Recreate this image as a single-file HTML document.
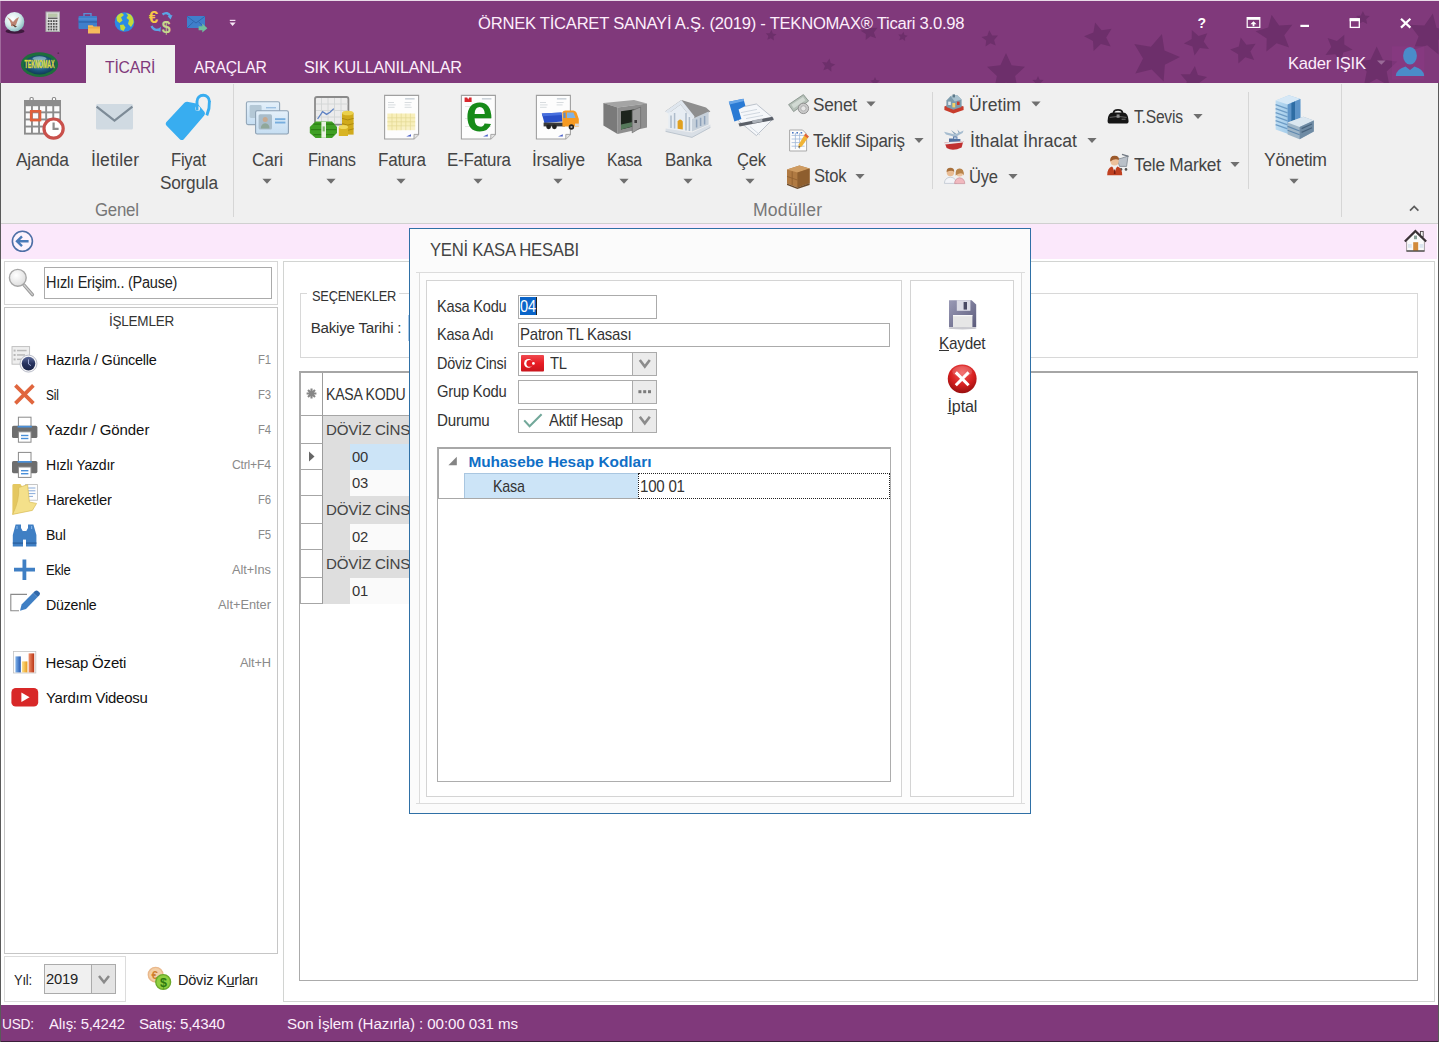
<!DOCTYPE html><html><head><meta charset="utf-8"><title>TEKNOMAX Ticari</title><style>
html,body{margin:0;padding:0;}body{width:1439px;height:1042px;overflow:hidden;position:relative;background:#fff;font-family:"Liberation Sans",sans-serif;}
.b{position:absolute;box-sizing:border-box;}.t{position:absolute;white-space:nowrap;line-height:1;transform-origin:0 50%;}svg{position:absolute;overflow:visible;}
</style></head><body>
<div class="b" style="left:0px;top:0px;width:1439px;height:83px;background:#80397b;"></div>
<svg style="left:0;top:0" width="1439" height="83" viewBox="0 0 1439 83"><g fill="#6d2f6b"><polygon points="1095.1,22.5 1101.6,30.3 1111.6,28.8 1106.2,37.4 1110.7,46.4 1100.9,44.0 1093.6,51.0 1093.0,40.9 1084.0,36.2 1093.4,32.5"/><polygon points="1161.9,34.0 1164.5,50.6 1180.0,57.1 1164.9,64.7 1163.6,81.5 1151.7,69.5 1135.3,73.4 1143.0,58.4 1134.3,44.0 1150.9,46.7"/><polygon points="1191.8,29.9 1198.6,35.9 1207.3,33.2 1203.7,41.5 1209.0,49.0 1199.9,48.1 1194.5,55.4 1192.5,46.5 1183.9,43.6 1191.7,39.0"/><polygon points="1194.9,66.1 1197.9,75.0 1207.1,77.1 1199.5,82.7 1200.4,92.1 1192.7,86.7 1184.0,90.4 1186.8,81.4 1180.6,74.3 1190.0,74.2"/><polygon points="1240.7,37.4 1246.4,44.7 1255.6,43.7 1250.4,51.4 1254.2,59.9 1245.3,57.3 1238.4,63.5 1238.1,54.2 1230.1,49.6 1238.8,46.5"/><polygon points="1271.6,14.7 1279.1,25.5 1292.3,24.8 1284.3,35.3 1289.1,47.6 1276.6,43.3 1266.4,51.6 1266.7,38.4 1255.6,31.3 1268.2,27.5"/><polygon points="1362.9,10.9 1365.0,15.4 1369.8,15.9 1366.2,19.3 1367.2,24.1 1362.9,21.7 1358.6,24.1 1359.6,19.3 1356.0,15.9 1360.8,15.4"/><polygon points="1344.3,34.8 1344.3,44.5 1352.6,49.7 1343.3,52.6 1341.0,62.1 1335.3,54.2 1325.5,54.9 1331.3,47.1 1327.6,38.0 1336.9,41.1"/><polygon points="1432.8,13.5 1436.5,27.7 1450.6,32.0 1438.2,39.9 1438.6,54.6 1427.2,45.3 1413.3,50.1 1418.6,36.5 1409.8,24.8 1424.4,25.6"/><polygon points="1376.7,46.5 1382.9,59.8 1397.4,61.6 1386.7,71.5 1389.5,85.9 1376.7,78.8 1363.9,85.9 1366.7,71.5 1356.0,61.6 1370.5,59.8"/><polygon points="771.5,29.8 772.8,33.4 776.6,34.2 773.5,36.6 773.9,40.4 770.8,38.2 767.3,39.8 768.3,36.1 765.8,33.3 769.6,33.2"/><polygon points="868.0,23.1 871.5,28.1 877.5,27.8 873.9,32.6 876.1,38.3 870.4,36.3 865.7,40.1 865.8,34.0 860.7,30.7 866.5,29.0"/><polygon points="903.5,31.7 904.5,35.0 907.7,35.8 905.0,37.8 905.1,41.1 902.5,39.1 899.3,40.3 900.4,37.1 898.3,34.5 901.7,34.6"/><polygon points="989.2,30.3 992.2,35.4 998.0,35.6 994.1,39.9 995.7,45.6 990.4,43.2 985.5,46.5 986.2,40.6 981.5,37.0 987.3,35.8"/><polygon points="829.5,58.5 830.7,63.1 835.2,64.4 831.3,67.0 831.4,71.7 827.7,68.7 823.3,70.3 825.0,65.9 822.1,62.1 826.8,62.4"/><polygon points="1006.0,53.0 1011.6,65.2 1025.0,66.8 1015.1,76.0 1017.8,89.2 1006.0,82.6 994.2,89.2 996.9,76.0 987.0,66.8 1000.4,65.2"/><polygon points="875.0,77.0 876.4,80.1 879.8,80.5 877.3,82.7 877.9,86.0 875.0,84.4 872.1,86.0 872.7,82.7 870.2,80.5 873.6,80.1"/><polygon points="1038.0,76.0 1039.7,79.7 1043.7,80.1 1040.7,82.9 1041.5,86.9 1038.0,84.9 1034.5,86.9 1035.3,82.9 1032.3,80.1 1036.3,79.7"/></g></svg>
<div class="b" style="left:86px;top:45px;width:89px;height:38px;background:#f0f0f0;"></div>
<div class="b" style="left:0px;top:83px;width:1439px;height:140px;background:#f0f0f0;"></div>
<div class="b" style="left:0px;top:223px;width:1439px;height:1px;background:#d0d0d0;"></div>
<div class="b" style="left:0px;top:224px;width:1439px;height:35px;background:#fbe8fb;"></div>
<div class="b" style="left:1437px;top:224px;width:1px;height:35px;background:#fff;"></div>
<div class="b" style="left:0px;top:259px;width:1439px;height:746px;background:#ffffff;"></div>
<div class="b" style="left:233px;top:84px;width:1px;height:133px;background:#d6d6d6;"></div>
<div class="b" style="left:932px;top:92px;width:1px;height:97px;background:#d6d6d6;"></div>
<div class="b" style="left:1248px;top:92px;width:1px;height:97px;background:#d6d6d6;"></div>
<div class="b" style="left:1341px;top:84px;width:1px;height:133px;background:#d6d6d6;"></div>
<div class="b" style="left:4px;top:261px;width:274px;height:44px;background:#fff;border:1px solid #d6d6d6;"></div>
<div class="b" style="left:44px;top:267px;width:228px;height:32px;background:#fff;border:1px solid #ababab;"></div>
<div class="b" style="left:4px;top:307px;width:274px;height:647px;background:#fff;border:1px solid #c6c6c6;"></div>
<div class="b" style="left:4px;top:956px;width:122px;height:46px;background:#fff;border:1px solid #dcdcdc;"></div>
<div class="b" style="left:44px;top:964px;width:72px;height:30px;background:#f0f0f0;border:1px solid #ababab;"></div>
<div class="b" style="left:91px;top:965px;width:24px;height:28px;background:#e4e4e4;border-left:1px solid #ababab;"></div>
<div class="b" style="left:283px;top:261px;width:1152px;height:741px;background:#fff;border:1px solid #d2d4d2;"></div>
<div class="b" style="left:300px;top:293px;width:1118px;height:65px;background:#fff;border:1px solid #d8d8d8;"></div>
<div class="b" style="left:307px;top:288px;width:92px;height:12px;background:#fff;"></div>
<div class="b" style="left:299px;top:371px;width:1119px;height:610px;background:#fff;border:1px solid #ababab;border-top:2px solid #a6a6a6;"></div>
<div class="b" style="left:300px;top:373px;width:1px;height:231px;background:#a9a9a9;"></div>
<div class="b" style="left:301px;top:373px;width:22px;height:43px;background:#fff;border-right:1px solid #9c9c9c;border-bottom:1px solid #a6a6a6;"></div>
<div class="b" style="left:323px;top:415px;width:86px;height:1px;background:#a6a6a6;"></div>
<div class="b" style="left:301px;top:416px;width:22px;height:28px;background:#fff;border-right:1px solid #9c9c9c;border-bottom:1px solid #a6a6a6;"></div>
<div class="b" style="left:323px;top:416px;width:86px;height:28px;background:#dedede;"></div>
<div class="b" style="left:301px;top:444px;width:22px;height:26px;background:#fff;border-right:1px solid #9c9c9c;border-bottom:1px solid #a6a6a6;"></div>
<div class="b" style="left:323px;top:444px;width:27px;height:26px;background:#dedede;"></div>
<div class="b" style="left:350px;top:444px;width:59px;height:26px;background:#cce4f7;"></div>
<div class="b" style="left:301px;top:470px;width:22px;height:26px;background:#fff;border-right:1px solid #9c9c9c;border-bottom:1px solid #a6a6a6;"></div>
<div class="b" style="left:323px;top:470px;width:27px;height:26px;background:#dedede;"></div>
<div class="b" style="left:350px;top:470px;width:59px;height:26px;background:#fafafa;"></div>
<div class="b" style="left:301px;top:496px;width:22px;height:28px;background:#fff;border-right:1px solid #9c9c9c;border-bottom:1px solid #a6a6a6;"></div>
<div class="b" style="left:323px;top:496px;width:86px;height:28px;background:#dedede;"></div>
<div class="b" style="left:301px;top:524px;width:22px;height:26px;background:#fff;border-right:1px solid #9c9c9c;border-bottom:1px solid #a6a6a6;"></div>
<div class="b" style="left:323px;top:524px;width:27px;height:26px;background:#dedede;"></div>
<div class="b" style="left:350px;top:524px;width:59px;height:26px;background:#fafafa;"></div>
<div class="b" style="left:301px;top:550px;width:22px;height:28px;background:#fff;border-right:1px solid #9c9c9c;border-bottom:1px solid #a6a6a6;"></div>
<div class="b" style="left:323px;top:550px;width:86px;height:28px;background:#dedede;"></div>
<div class="b" style="left:301px;top:578px;width:22px;height:26px;background:#fff;border-right:1px solid #9c9c9c;border-bottom:1px solid #a6a6a6;"></div>
<div class="b" style="left:323px;top:578px;width:27px;height:26px;background:#dedede;"></div>
<div class="b" style="left:350px;top:578px;width:59px;height:26px;background:#fafafa;"></div>
<svg style="left:308px;top:451px" width="8" height="11"><path d="M1 0.5 L6.5 5.5 L1 10.5Z" fill="#666"/></svg>
<div class="b" style="left:408px;top:315px;width:1px;height:26px;background:#a9c8e8;"></div>
<div class="b" style="left:0px;top:1005px;width:1439px;height:37px;background:#80397b;"></div>
<div class="b" style="left:0px;top:1041px;width:1439px;height:1px;background:#3c1e3a;"></div>
<div class="b" style="left:0px;top:83px;width:1px;height:959px;background:#5a5a5a;"></div>
<div class="b" style="left:1438px;top:83px;width:1px;height:959px;background:#5a5a5a;"></div>
<span class="t" style="left:477.5px;top:16.000px;font-size:16.9px;color:#fdeefb;letter-spacing:-0.250px;transform:scaleX(0.9821);">ÖRNEK TİCARET SANAYİ A.Ş. (2019) - TEKNOMAX® Ticari 3.0.98</span>
<span class="t" style="left:105.3px;top:60.000px;font-size:16.9px;color:#80397b;letter-spacing:-0.250px;transform:scaleX(0.9330);">TİCARİ</span>
<span class="t" style="left:194px;top:60.000px;font-size:16.9px;color:#fdeefb;letter-spacing:-0.250px;transform:scaleX(0.9323);">ARAÇLAR</span>
<span class="t" style="left:304px;top:60.000px;font-size:16.9px;color:#fdeefb;letter-spacing:-0.250px;transform:scaleX(0.9631);">SIK KULLANILANLAR</span>
<span class="t" style="left:1288px;top:55.000px;font-size:17px;color:#fdeefb;letter-spacing:-0.250px;transform:scaleX(0.9754);">Kader IŞIK</span>
<span class="t" style="left:16px;top:152.000px;font-size:17.6px;color:#444;letter-spacing:-0.250px;transform:scaleX(0.9898);">Ajanda</span>
<span class="t" style="left:91px;top:152.000px;font-size:17.6px;color:#444;letter-spacing:0.152px;">İletiler</span>
<span class="t" style="left:171px;top:152.000px;font-size:17.6px;color:#444;letter-spacing:-0.250px;transform:scaleX(0.9424);">Fiyat</span>
<span class="t" style="left:252px;top:152.000px;font-size:17.6px;color:#444;letter-spacing:-0.250px;transform:scaleX(0.9836);">Cari</span>
<span class="t" style="left:308px;top:152.000px;font-size:17.6px;color:#444;letter-spacing:-0.250px;transform:scaleX(0.9309);">Finans</span>
<span class="t" style="left:378px;top:152.000px;font-size:17.6px;color:#444;letter-spacing:-0.250px;transform:scaleX(0.9676);">Fatura</span>
<span class="t" style="left:447px;top:152.000px;font-size:17.6px;color:#444;letter-spacing:-0.250px;transform:scaleX(0.9595);">E-Fatura</span>
<span class="t" style="left:532px;top:152.000px;font-size:17.6px;color:#444;letter-spacing:-0.250px;transform:scaleX(0.9818);">İrsaliye</span>
<span class="t" style="left:607px;top:152.000px;font-size:17.6px;color:#444;letter-spacing:-0.250px;transform:scaleX(0.8892);">Kasa</span>
<span class="t" style="left:665px;top:152.000px;font-size:17.6px;color:#444;letter-spacing:-0.250px;transform:scaleX(0.9613);">Banka</span>
<span class="t" style="left:737px;top:152.000px;font-size:17.6px;color:#444;letter-spacing:-0.250px;transform:scaleX(0.9417);">Çek</span>
<span class="t" style="left:1264px;top:152.000px;font-size:17.6px;color:#444;letter-spacing:-0.258px;">Yönetim</span>
<span class="t" style="left:160px;top:175.000px;font-size:17.6px;color:#444;letter-spacing:-0.250px;transform:scaleX(0.9805);">Sorgula</span>
<span class="t" style="left:95px;top:202.000px;font-size:17.6px;color:#777;letter-spacing:-0.250px;transform:scaleX(0.9575);">Genel</span>
<span class="t" style="left:753px;top:202.000px;font-size:17.6px;color:#777;letter-spacing:0.217px;">Modüller</span>
<span class="t" style="left:813px;top:97.000px;font-size:17.6px;color:#444;letter-spacing:-0.250px;transform:scaleX(0.9781);">Senet</span>
<span class="t" style="left:813px;top:133.000px;font-size:17.6px;color:#444;letter-spacing:-0.250px;transform:scaleX(0.9634);">Teklif Sipariş</span>
<span class="t" style="left:813.6px;top:168.000px;font-size:17.6px;color:#444;letter-spacing:-0.250px;transform:scaleX(0.9429);">Stok</span>
<span class="t" style="left:969px;top:97.000px;font-size:17.6px;color:#444;letter-spacing:0.037px;">Üretim</span>
<span class="t" style="left:970px;top:133.000px;font-size:17.6px;color:#444;letter-spacing:0.028px;">İthalat İhracat</span>
<span class="t" style="left:969px;top:169.000px;font-size:17.6px;color:#444;letter-spacing:-0.250px;transform:scaleX(0.9417);">Üye</span>
<span class="t" style="left:1134px;top:109.000px;font-size:17.6px;color:#444;letter-spacing:-0.250px;transform:scaleX(0.8874);">T.Sevis</span>
<span class="t" style="left:1134px;top:157.000px;font-size:17.6px;color:#444;letter-spacing:-0.250px;transform:scaleX(0.9837);">Tele Market</span>
<span class="t" style="left:46.3px;top:275.000px;font-size:16px;color:#222;letter-spacing:-0.250px;transform:scaleX(0.9062);">Hızlı Erişim.. (Pause)</span>
<span class="t" style="left:108.6px;top:314.000px;font-size:14.8px;color:#333;letter-spacing:-0.250px;transform:scaleX(0.9125);">İŞLEMLER</span>
<span class="t" style="left:45.6px;top:352.000px;font-size:15px;color:#111;letter-spacing:-0.250px;transform:scaleX(0.9637);">Hazırla / Güncelle</span>
<span class="t" style="left:258px;top:354.000px;font-size:12.8px;color:#8a8a8a;letter-spacing:-0.250px;transform:scaleX(0.8851);">F1</span>
<span class="t" style="left:45.6px;top:387.000px;font-size:15px;color:#111;letter-spacing:-0.250px;transform:scaleX(0.7915);">Sil</span>
<span class="t" style="left:258px;top:389.000px;font-size:12.8px;color:#8a8a8a;letter-spacing:-0.250px;transform:scaleX(0.8851);">F3</span>
<span class="t" style="left:45.6px;top:422.000px;font-size:15px;color:#111;letter-spacing:-0.070px;">Yazdır / Gönder</span>
<span class="t" style="left:258px;top:424.000px;font-size:12.8px;color:#8a8a8a;letter-spacing:-0.250px;transform:scaleX(0.8851);">F4</span>
<span class="t" style="left:45.6px;top:457.000px;font-size:15px;color:#111;letter-spacing:-0.250px;transform:scaleX(0.9374);">Hızlı Yazdır</span>
<span class="t" style="left:232px;top:459.000px;font-size:12.8px;color:#8a8a8a;letter-spacing:-0.250px;transform:scaleX(0.9556);">Ctrl+F4</span>
<span class="t" style="left:45.6px;top:492.000px;font-size:15px;color:#111;letter-spacing:-0.250px;transform:scaleX(0.9828);">Hareketler</span>
<span class="t" style="left:258px;top:494.000px;font-size:12.8px;color:#8a8a8a;letter-spacing:-0.250px;transform:scaleX(0.8851);">F6</span>
<span class="t" style="left:45.6px;top:527.000px;font-size:15px;color:#111;letter-spacing:-0.250px;transform:scaleX(0.9345);">Bul</span>
<span class="t" style="left:258px;top:529.000px;font-size:12.8px;color:#8a8a8a;letter-spacing:-0.250px;transform:scaleX(0.8851);">F5</span>
<span class="t" style="left:45.6px;top:562.000px;font-size:15px;color:#111;letter-spacing:-0.250px;transform:scaleX(0.8721);">Ekle</span>
<span class="t" style="left:232px;top:564.000px;font-size:12.8px;color:#8a8a8a;letter-spacing:-0.081px;">Alt+Ins</span>
<span class="t" style="left:45.6px;top:597.000px;font-size:15px;color:#111;letter-spacing:-0.250px;transform:scaleX(0.9487);">Düzenle</span>
<span class="t" style="left:218px;top:599.000px;font-size:12.8px;color:#8a8a8a;">Alt+Enter</span>
<span class="t" style="left:45.6px;top:655.000px;font-size:15px;color:#111;letter-spacing:-0.175px;">Hesap Özeti</span>
<span class="t" style="left:240px;top:657.000px;font-size:12.8px;color:#8a8a8a;letter-spacing:-0.164px;">Alt+H</span>
<span class="t" style="left:45.6px;top:690.000px;font-size:15px;color:#111;letter-spacing:-0.250px;transform:scaleX(0.9971);">Yardım Videosu</span>
<span class="t" style="left:13.5px;top:972.000px;font-size:15.2px;color:#222;letter-spacing:-0.250px;transform:scaleX(0.8536);">Yıl:</span>
<span class="t" style="left:46.3px;top:971.000px;font-size:15.2px;color:#222;letter-spacing:-0.250px;transform:scaleX(0.9713);">2019</span>
<span class="t" style="left:177.6px;top:972.000px;font-size:15px;color:#222;letter-spacing:-0.250px;transform:scaleX(0.9701);">Döviz K<u>u</u>rları</span>
<span class="t" style="left:2px;top:1016.000px;font-size:15.1px;color:#fdeefb;letter-spacing:-0.250px;transform:scaleX(0.9062);">USD:</span>
<span class="t" style="left:49px;top:1016.000px;font-size:15.1px;color:#fdeefb;letter-spacing:-0.250px;transform:scaleX(0.9874);">Alış: 5,4242</span>
<span class="t" style="left:139px;top:1016.000px;font-size:15.1px;color:#fdeefb;letter-spacing:-0.250px;">Satış: 5,4340</span>
<span class="t" style="left:287px;top:1016.000px;font-size:15.1px;color:#fdeefb;letter-spacing:-0.067px;">Son İşlem (Hazırla) : 00:00 031 ms</span>
<span class="t" style="left:311.5px;top:289.000px;font-size:14.8px;color:#333;letter-spacing:-0.250px;transform:scaleX(0.8667);">SEÇENEKLER</span>
<span class="t" style="left:310.7px;top:320.000px;font-size:15.2px;color:#333;letter-spacing:-0.250px;">Bakiye Tarihi :</span>
<span class="t" style="left:326.3px;top:387.000px;font-size:15.7px;color:#333;letter-spacing:-0.250px;transform:scaleX(0.8977);">KASA KODU</span>
<span class="t" style="left:326.3px;top:422.000px;font-size:15.4px;color:#444;letter-spacing:-0.250px;transform:scaleX(0.9815);">DÖVİZ CİNSİ</span>
<span class="t" style="left:326.3px;top:502.000px;font-size:15.4px;color:#444;letter-spacing:-0.250px;transform:scaleX(0.9815);">DÖVİZ CİNSİ</span>
<span class="t" style="left:326.3px;top:556.000px;font-size:15.4px;color:#444;letter-spacing:-0.250px;transform:scaleX(0.9815);">DÖVİZ CİNSİ</span>
<span class="t" style="left:352.2px;top:449.000px;font-size:15px;color:#333;letter-spacing:-0.250px;transform:scaleX(0.9856);">00</span>
<span class="t" style="left:352.2px;top:475.000px;font-size:15px;color:#333;letter-spacing:-0.250px;transform:scaleX(0.9856);">03</span>
<span class="t" style="left:352.2px;top:529.000px;font-size:15px;color:#333;letter-spacing:-0.250px;transform:scaleX(0.9856);">02</span>
<span class="t" style="left:352.2px;top:583.000px;font-size:15px;color:#333;letter-spacing:-0.250px;transform:scaleX(0.9856);">01</span>
<svg style="left:305.6px;top:388.4px" width="11" height="11" viewBox="0 0 11 11"><g stroke="#868686" stroke-width="2.1"><path d="M5.5 0.6V10.4M0.6 5.5H10.4M2 2L9 9M9 2L2 9"/></g></svg>
<svg style="left:0;top:0" width="1439" height="1042" viewBox="0 0 1439 1042"><defs><radialGradient id="orb" cx="40%" cy="35%" r="70%"><stop offset="0" stop-color="#ffffff"/><stop offset="0.55" stop-color="#d6ecec"/><stop offset="1" stop-color="#7fb6ba"/></radialGradient><radialGradient id="lg" cx="50%" cy="45%" r="60%"><stop offset="0" stop-color="#6fb4c4"/><stop offset="0.55" stop-color="#1d5a82"/><stop offset="1" stop-color="#0e3350"/></radialGradient><linearGradient id="card" x1="0" y1="0" x2="0" y2="1"><stop offset="0" stop-color="#e4f0fa"/><stop offset="1" stop-color="#c6def2"/></linearGradient><linearGradient id="tw" x1="0" y1="0" x2="1" y2="0"><stop offset="0" stop-color="#bcdcf2"/><stop offset="1" stop-color="#8ebde2"/></linearGradient><radialGradient id="mg" cx="40%" cy="35%" r="70%"><stop offset="0" stop-color="#ffffff"/><stop offset="1" stop-color="#dcdcdc"/></radialGradient><linearGradient id="ck" x1="0" y1="0" x2="0" y2="1"><stop offset="0" stop-color="#5a6898"/><stop offset="0.5" stop-color="#27335f"/><stop offset="1" stop-color="#1a2448"/></linearGradient><linearGradient id="b1" x1="0" y1="0" x2="1" y2="0"><stop offset="0" stop-color="#7fb2ea"/><stop offset="1" stop-color="#2458b0"/></linearGradient><linearGradient id="b2" x1="0" y1="0" x2="1" y2="0"><stop offset="0" stop-color="#fde08a"/><stop offset="1" stop-color="#e89a1c"/></linearGradient><linearGradient id="b3" x1="0" y1="0" x2="1" y2="0"><stop offset="0" stop-color="#f0906a"/><stop offset="1" stop-color="#b83414"/></linearGradient></defs><rect x="0" y="0" width="1439" height="1" fill="#e9dbe8"/><rect x="0" y="1" width="1" height="82" fill="#a06a9c"/><ellipse cx="15" cy="31.3" rx="9.5" ry="2.4" fill="#3f1a3e"/><circle cx="14.5" cy="21.8" r="9.8" fill="url(#orb)"/><path d="M7 17 Q11 19 13 22 Q16 18 19 17 Q17 22 16 25 Q14 27 11 26 Q12 23 7 17Z" fill="#b5705a" opacity="0.85"/><path d="M12 24 L17 26.5 L15 27.5Z" fill="#5a4438"/><rect x="46" y="12" width="13.5" height="19.5" fill="#dcdcdc" stroke="#a9a9a9" stroke-width="1"/><rect x="48" y="13.5" width="9.5" height="3.5" fill="#b9c7a9"/><rect x="48" y="17.6" width="9.5" height="1.3" fill="#555"/><g fill="#505050"><rect x="47.8" y="20.2" width="1.7" height="1.8"/><rect x="50.4" y="20.2" width="1.7" height="1.8"/><rect x="53.0" y="20.2" width="1.7" height="1.8"/><rect x="55.6" y="20.2" width="1.7" height="1.8"/><rect x="47.8" y="23.0" width="1.7" height="1.8"/><rect x="50.4" y="23.0" width="1.7" height="1.8"/><rect x="53.0" y="23.0" width="1.7" height="1.8"/><rect x="55.6" y="23.0" width="1.7" height="1.8"/><rect x="47.8" y="25.8" width="1.7" height="1.8"/><rect x="50.4" y="25.8" width="1.7" height="1.8"/><rect x="53.0" y="25.8" width="1.7" height="1.8"/><rect x="55.6" y="25.8" width="1.7" height="1.8"/><rect x="47.8" y="28.6" width="1.7" height="1.8"/><rect x="50.4" y="28.6" width="1.7" height="1.8"/><rect x="53.0" y="28.6" width="1.7" height="1.8"/><rect x="55.6" y="28.6" width="1.7" height="1.8"/></g><path d="M84 16 V13.6 H91 V16" fill="none" stroke="#5a8fd6" stroke-width="1.4"/><rect x="78.5" y="16" width="18.5" height="13" rx="1" fill="#3f7fcb"/><rect x="78.5" y="21.3" width="18.5" height="1.3" fill="#2d63a8"/><rect x="78.5" y="18.5" width="18.5" height="0.9" fill="#5c97dc"/><path d="M88 25.2 H92.6 L93.6 26.4 H100 V33.6 H88Z" fill="#f6bb5c"/><rect x="88" y="27.4" width="12" height="0.9" fill="#e5a23c"/><circle cx="124.5" cy="22" r="9.8" fill="#2a8be6"/><path d="M116.5 17.5 Q118 13.5 122 13 L124 15 L121 17.5 L122.5 20.5 L119.5 23 L117 21Z M126 13 L130.5 14.5 Q134 18 133.5 23 L131 27 L128 24 L129 20 L126.5 18 L128 15.5Z M120 25 L123.5 24.5 L125.5 27.5 L123.5 31 L120.5 29.5Z" fill="#c6da3a"/><text x="148.8" y="23.2" font-size="17" font-weight="bold" fill="#f8c846" font-family="Liberation Sans">€</text><text x="161.8" y="32.6" font-size="16" font-weight="bold" fill="#c6d88c" font-family="Liberation Sans">$</text><path d="M162.5 14.5 Q167.5 11 170.5 16.5" fill="none" stroke="#5aa6e6" stroke-width="2.4"/><path d="M172.5 15 L170.6 19.4 L167.6 16.2Z" fill="#5aa6e6"/><path d="M151.5 26 Q154 31 159 29.5" fill="none" stroke="#5aa6e6" stroke-width="2.4"/><path d="M160.8 26.8 L160.5 31.8 L156.6 30.6Z" fill="#5aa6e6"/><rect x="187" y="16" width="18" height="12" fill="#3f7fcb"/><path d="M187 16.3 L196 23 L205 16.3 M187 28 L193.5 21.8 M205 28 L198.5 21.8" fill="none" stroke="#2f66ad" stroke-width="1"/><path d="M198.6 26.2 H202.3 V23.6 L207.4 28.2 L202.3 32.6 V30.2 H198.6Z" fill="#6fbf9c"/><rect x="229.8" y="19.8" width="5.6" height="1.2" fill="#f0dcee"/><path d="M229.6 22.6 H235.6 L232.6 26Z" fill="#f6e8f5"/><ellipse cx="39.5" cy="64.6" rx="18.6" ry="12.4" fill="#1d6e3c"/><ellipse cx="39.5" cy="64.8" rx="15.2" ry="9.6" fill="url(#lg)"/><ellipse cx="39.5" cy="58.5" rx="7" ry="2.2" fill="#bfe2e6" opacity="0.55"/><text x="24.6" y="68.4" font-size="10.4" font-weight="bold" fill="#f2e640" stroke="#b9c23a" stroke-width="0.3" font-family="Liberation Sans" textLength="30" lengthAdjust="spacingAndGlyphs">TEKNOMAX</text><circle cx="58.3" cy="53.2" r="0.9" fill="#5a2a58"/><text x="1197.6" y="28.3" font-size="14" font-weight="bold" fill="#fff" font-family="Liberation Sans">?</text><rect x="1247.2" y="17.6" width="12.6" height="9.8" fill="none" stroke="#fff" stroke-width="1.2"/><rect x="1247.2" y="17.6" width="12.6" height="2.2" fill="#fff"/><path d="M1253.5 21.2 L1256.6 24.2 H1254.4 V26.2 H1252.6 V24.2 H1250.4Z" fill="#fff"/><rect x="1300.4" y="24.8" width="8.6" height="2.2" fill="#fff"/><rect x="1350.3" y="19" width="9" height="8.4" fill="none" stroke="#fff" stroke-width="1.3"/><rect x="1349.7" y="18.2" width="10.2" height="3" fill="#fff"/><path d="M1401 18.7 L1410.4 27.6 M1410.4 18.7 L1401 27.6" stroke="#fff" stroke-width="2.2" fill="none"/><path d="M1377 60.4 H1385.6 L1381.3 64.8Z" fill="#9a6a98"/><rect x="1392" y="46.3" width="32.4" height="33.4" fill="#8c3a86" opacity="0.5"/><ellipse cx="1410" cy="55.8" rx="6.9" ry="8.8" fill="#4a8cca"/><path d="M1395.8 76 Q1396 69.5 1405.5 66.6 L1410 70 L1414.5 66.6 Q1424 69.5 1424.2 76Z" fill="#4a8cca"/><rect x="30" y="97.5" width="3.2" height="5.5" rx="1.2" fill="#fff" stroke="#8c8c8c" stroke-width="1.2"/><rect x="52.4" y="97.5" width="3.2" height="5.5" rx="1.2" fill="#fff" stroke="#8c8c8c" stroke-width="1.2"/><rect x="24" y="100" width="37" height="34.6" fill="#8c8c8c"/><g fill="#fbfbfb"><rect x="25.8" y="106.2" width="5.2" height="5.2"/><rect x="32.9" y="106.2" width="5.2" height="5.2"/><rect x="40.0" y="106.2" width="5.2" height="5.2"/><rect x="47.1" y="106.2" width="5.2" height="5.2"/><rect x="54.2" y="106.2" width="5.2" height="5.2"/><rect x="25.8" y="113.3" width="5.2" height="5.2"/><rect x="32.9" y="113.3" width="5.2" height="5.2"/><rect x="40.0" y="113.3" width="5.2" height="5.2"/><rect x="47.1" y="113.3" width="5.2" height="5.2"/><rect x="54.2" y="113.3" width="5.2" height="5.2"/><rect x="25.8" y="120.4" width="5.2" height="5.2"/><rect x="32.9" y="120.4" width="5.2" height="5.2"/><rect x="40.0" y="120.4" width="5.2" height="5.2"/><rect x="47.1" y="120.4" width="5.2" height="5.2"/><rect x="54.2" y="120.4" width="5.2" height="5.2"/><rect x="25.8" y="127.5" width="5.2" height="5.2"/><rect x="32.9" y="127.5" width="5.2" height="5.2"/><rect x="40.0" y="127.5" width="5.2" height="5.2"/><rect x="47.1" y="127.5" width="5.2" height="5.2"/><rect x="54.2" y="127.5" width="5.2" height="5.2"/></g><rect x="31.2" y="111.3" width="8.8" height="8.8" fill="none" stroke="#e0603c" stroke-width="2.6"/><circle cx="53.6" cy="128.6" r="9.6" fill="#fff" stroke="#c9504b" stroke-width="3.2"/><path d="M53.6 122.5 V128.8 H58.6" fill="none" stroke="#8c8c8c" stroke-width="2.2"/><rect x="96" y="104" width="37" height="25.6" rx="1.5" fill="#d0dae2"/><path d="M96.6 106.6 L114.5 120.6 L132.4 106.6" fill="none" stroke="#7d8b97" stroke-width="2.2"/><path d="M166.2 122.2 L184.4 102.8 Q186 101.4 188.4 101.9 L197.6 103.8 L204.6 112 Q205.6 113.8 204.2 115.4 L183.6 139.4 Q181.8 140.8 179.8 139.2 L166.4 125.6 Q165 123.8 166.2 122.2Z" fill="#38adf0"/><circle cx="197.6" cy="108.4" r="2.5" fill="#f0f0f0"/><path d="M197 110.4 V101.4 A6.2 6.2 0 0 1 209.4 101.4 Q209.8 108.4 206.8 115.4" fill="none" stroke="#38adf0" stroke-width="2.9"/><rect x="246.4" y="101.8" width="33.2" height="22.8" rx="1.6" fill="url(#card)" stroke="#93a7b9" stroke-width="1.1"/><rect x="249.6" y="105" width="12" height="13" rx="1.4" fill="#b4c8d6"/><rect x="266" y="107" width="10" height="1.4" fill="#9cc0e2"/><rect x="255.6" y="110.8" width="32.8" height="23.2" rx="1.6" fill="url(#card)" stroke="#8b9fb2" stroke-width="1.1"/><rect x="258.6" y="114.2" width="13.4" height="15.4" rx="1.6" fill="#a9bdcb"/><circle cx="265.2" cy="119.6" r="2.5" fill="#c9a98f"/><path d="M260.8 128.6 Q261 123.4 265.2 123.2 Q269.4 123.4 269.6 128.6Z" fill="#8fa79a"/><rect x="275" y="118.2" width="10.4" height="1.9" fill="#78aede"/><rect x="275" y="121.6" width="10.4" height="1.9" fill="#78aede"/><rect x="315" y="97" width="33.4" height="27.6" rx="2" fill="#ececec" stroke="#8a8a8a" stroke-width="1.8"/><path d="M321.5 98 V124 M328 98 V124 M334.5 98 V124 M341 98 V124 M316 104 H347.6 M316 110.5 H347.6 M316 117 H347.6" stroke="#d3d6d6" stroke-width="0.9" fill="none"/><path d="M317.6 119 L322.6 111.6 L326.6 114.4 L330 112.2 L333.8 108.6" fill="none" stroke="#5f83c4" stroke-width="1.3"/><path d="M342 113 V134.6 H353.6 V113Z" fill="#d0aa1c"/><ellipse cx="347.8" cy="113" rx="5.8" ry="2.3" fill="#ead04c"/><path d="M342 118.4 Q347.8 121.4 353.6 118.4 M342 123.6 Q347.8 126.6 353.6 123.6 M342 128.8 Q347.8 131.8 353.6 128.8" fill="none" stroke="#a8860e" stroke-width="0.9"/><path d="M338.8 127 V136 H348 V127Z" fill="#d8b424"/><ellipse cx="343.4" cy="127" rx="4.6" ry="2" fill="#f0d95c"/><path d="M309.8 127 L315.6 121.4 H332 L337 127 V133 L332 138 H315.6 L309.8 133Z" fill="#3fa024"/><path d="M313.4 124.2 H334.2 M311 129.6 H336.4 M313.4 134.6 H334.2" stroke="#2c7f15" stroke-width="1.2" fill="none"/><rect x="321.4" y="121.8" width="4.6" height="16" fill="#e9f1e2"/><rect x="322.6" y="126.4" width="2.2" height="5" fill="#7ab866"/><path d="M384.6 95.4 H418.6 V134.4 L414.0 139 H384.6 Z" fill="#fdfdfd" stroke="#a0a0a0" stroke-width="1.1"/><path d="M418.6 134.4 H414.0 V139" fill="#e4e4e4" stroke="#a0a0a0" stroke-width="0.9"/><rect x="405.1" y="98.2" width="9.5" height="1.3" fill="#c3cbd3"/><path d="M406.20000000000005 136.6 L411.0 134.2 V136.6Z" fill="#4d63c9"/><g fill="#d8dcdf"><rect x="388" y="102" width="6" height="1"/><rect x="388" y="104.4" width="7.6" height="1"/><rect x="388" y="106.8" width="6.6" height="1"/><rect x="404.6" y="102" width="7" height="1"/><rect x="404.6" y="104.4" width="6" height="1"/><rect x="404.6" y="106.8" width="7" height="1"/></g><path d="M387.4 113.6 H415.2 V125.8 H401.2 V130.2 H387.4Z" fill="#f8efbb"/><path d="M401.2 125.8 H415.2 V130.2 H401.2Z" fill="#f9f1c8"/><path d="M387.4 117.8 H415.2 M387.4 121.8 H415.2 M387.4 125.8 H415.2 M392 113.6 V130.2 M396.6 113.6 V130.2 M401.2 113.6 V130.2 M405.8 113.6 V130.2 M410.4 113.6 V130.2" stroke="#e4d894" stroke-width="0.7" fill="none"/><path d="M461.4 95.4 H495.4 V134.4 L490.79999999999995 139 H461.4 Z" fill="#fdfdfd" stroke="#a0a0a0" stroke-width="1.1"/><path d="M495.4 134.4 H490.79999999999995 V139" fill="#e4e4e4" stroke="#a0a0a0" stroke-width="0.9"/><rect x="481.9" y="98.2" width="9.5" height="1.3" fill="#c3cbd3"/><path d="M483.0 136.6 L487.79999999999995 134.2 V136.6Z" fill="#4d63c9"/><path d="M464.6 97.6 H467.2 L468.2 99.4 L469.2 97.6 H471.6 V102 H464.6Z" fill="#d8262c"/><g fill="#e3e7e3"><rect x="465" y="106" width="6" height="1"/><rect x="465" y="118" width="26" height="1"/><rect x="465" y="126" width="26" height="1"/></g><text x="465.6" y="131.4" font-size="51" font-weight="bold" fill="#168a18" font-family="Liberation Sans" textLength="27.6" lengthAdjust="spacingAndGlyphs">e</text><path d="M536.4 95.4 H570.4 V134.4 L565.8 139 H536.4 Z" fill="#fdfdfd" stroke="#a0a0a0" stroke-width="1.1"/><path d="M570.4 134.4 H565.8 V139" fill="#e4e4e4" stroke="#a0a0a0" stroke-width="0.9"/><rect x="556.9" y="98.2" width="9.5" height="1.3" fill="#c3cbd3"/><path d="M558.0 136.6 L562.8 134.2 V136.6Z" fill="#4d63c9"/><g fill="#d8dcdf"><rect x="540" y="102" width="6" height="1"/><rect x="540" y="104.4" width="7.6" height="1"/><rect x="540" y="106.8" width="6.6" height="1"/><rect x="556.6" y="102" width="7" height="1"/><rect x="556.6" y="104.4" width="6" height="1"/></g><path d="M541.8 113.6 L561.6 112.6 L562.6 121.6 L544.4 123Z" fill="#2a50c8"/><path d="M541.8 113.6 L561.6 112.6 L561.8 115 L542.6 116.2Z" fill="#4870de"/><path d="M543.6 122.6 H565 V126.4 H543.6Z" fill="#3a3a3a"/><path d="M562.4 112.2 Q563 110.4 565.4 110.4 H573.4 Q575.6 110.6 576.6 112.8 L578.8 119 V126.6 H562.4Z" fill="#f59a23"/><path d="M567 112.6 H573.4 L575.6 118 H567Z" fill="#7fb2e6"/><path d="M563.4 112.6 H565.6 V118 H563.4Z" fill="#5c8ccc"/><rect x="575" y="123.6" width="4.2" height="2.6" fill="#d9d9d9"/><circle cx="548.6" cy="126.8" r="2.4" fill="#222"/><circle cx="554.4" cy="126.8" r="2.4" fill="#222"/><circle cx="571.4" cy="127" r="2.7" fill="#222"/><circle cx="571.4" cy="127" r="1.1" fill="#aaa"/><path d="M603.4 103 L634 100 L647 103.6 L617.6 107.4Z" fill="#a4a4a4"/><path d="M603.4 103 L617.6 107.4 V134 L603.4 125.4Z" fill="#7a7a7a"/><path d="M617.6 107.4 L647 103.6 V127.4 L617.6 134Z" fill="#8e8e8e"/><path d="M621 111.2 L637.2 109 V125.6 L621 129.4Z" fill="#1c241c"/><path d="M621 124.4 L635 121.4 V125.8 L621 129.4Z" fill="#55785a"/><path d="M632.2 110.6 L640.6 107 V127.8 L632.2 132.8Z" fill="#9c9c9c" stroke="#6c6c6c" stroke-width="0.7"/><rect x="634.4" y="120" width="2.6" height="3" fill="#3c3c3c"/><path d="M665 111.4 L681.4 100 L706 107.6 L710.4 111.6 L695.4 118.8 L690.6 113.4Z" fill="#8e8e8e"/><path d="M665 111.4 L681.4 100 L694.6 116.6 L692 119 L680.6 104.6 L668.4 113.4Z" fill="#dfe6ee"/><path d="M668.4 113.4 L680.6 104.6 L692 119 V131.6 L668.4 128.4Z" fill="#e7edf3"/><path d="M692 119 L708.6 111.6 V124.6 L692 131.6Z" fill="#c6d0da"/><path d="M671 115.4 V128 M674.6 113 V128.6 M686 113 V130.4 M689.4 117 V131" stroke="#aebccb" stroke-width="1.5" fill="none"/><path d="M696.6 119.6 V127.6 M700.6 117.8 V126 M704.6 116 V124.4" stroke="#8ea2ba" stroke-width="1.5" fill="none"/><path d="M677.6 128.8 V121.4 Q680.2 117.4 682.8 121.6 V129.6Z" fill="#e0a020"/><path d="M665.6 128.4 L692 132.6 L710.4 124.4 V127.4 L692 137.4 L665.6 131.4Z" fill="#d9dfe6"/><path d="M665.6 131.4 L692 137.4 L710.4 127.4" fill="none" stroke="#b3bcc6" stroke-width="0.8"/><path d="M734.4 108.6 L756.4 104 L773.6 118.4 L756.4 135.6 L738.6 121Z" fill="#f5f7fa" stroke="#b5bcc6" stroke-width="0.9"/><path d="M741 112.6 L757 109.4 M743.4 115.6 L760 112.4 M746 118.6 L763 115.4 M750 126.6 L760 135" stroke="#ccd4dc" stroke-width="0.9" fill="none"/><path d="M728.8 101.8 L743.4 98.8 L745.4 105.8 L738.6 109.6 L741.4 119 L734.4 121.4Z" fill="#2a7ad4"/><path d="M728.8 101.8 L743.4 98.8 L744 101 L729.6 104.4Z" fill="#68a6e8"/><path d="M738.4 123.4 L772.4 116.8 L773.8 120 L739.6 126.4Z" fill="#5a5f68"/><path d="M752 120.6 L762 118.6 L762.6 121.4 L752.6 123.4Z" fill="#aab0b8"/><path d="M788.6 104.6 L803.4 94.6 L808.6 101 L793.6 111.6Z" fill="#b5c0b8" stroke="#7f8c84" stroke-width="0.8"/><path d="M791.4 104.8 L803 97 L805.4 100.2 L793.8 108.2Z" fill="#d2dad4"/><circle cx="803.4" cy="108.4" r="5.2" fill="#c9c9c9" stroke="#8a8a8a" stroke-width="0.9"/><circle cx="803.4" cy="108.4" r="2.6" fill="#e6e6e6" stroke="#999" stroke-width="0.6"/><path d="M789.6 130 H802.6 L806.6 134 V151 H789.6Z" fill="#fcfcfc" stroke="#a9a9a9" stroke-width="1"/><path d="M791.6 135.4 H804.6 M791.6 139 H804.6 M791.6 142.6 H804.6 M791.6 146.2 H804.6 M795.4 133 V149 M799.6 133 V149" stroke="#9fb8d8" stroke-width="0.8" fill="none"/><g fill="#4a78c4"><rect x="792" y="132" width="1.6" height="1.6"/><rect x="796.4" y="132" width="1.6" height="1.6"/><rect x="800.6" y="132" width="1.6" height="1.6"/></g><path d="M805.4 133.6 L808.8 136.4 L801.8 146.6 L798.6 147.8 L798.8 144.2Z" fill="#f0b436"/><path d="M805.4 133.6 L808.8 136.4 L807.6 138.2 L804.2 135.4Z" fill="#e0603c"/><path d="M798.6 147.8 L798.7 145.8 L800.4 147.1Z" fill="#444"/><path d="M787 169.6 L799.4 165.4 L809.6 168.4 V183 L797.4 187.4 L787 183.4Z" fill="#b07a42"/><path d="M787 169.6 L799.4 165.4 L809.6 168.4 L797.4 172.6Z" fill="#cf9c62"/><path d="M797.4 172.6 L809.6 168.4 V183 L797.4 187.4Z" fill="#8e5e2e"/><path d="M787 176.4 L797.4 180 M792.2 171.4 V185.4" stroke="#8e5e2e" stroke-width="0.8" fill="none"/><path d="M787 183.4 L797.4 187.4 L809.6 183 V185 L797.4 189 L787 185Z" fill="#6b4a2a"/><path d="M944.4 106.4 L953 103 L963.6 106.4 V110 L953.4 113.6 L944.4 110Z" fill="#c83c2c"/><path d="M946.4 100.4 L950.6 96 L957 95 L961.6 99.6 V107 L953.4 109.8 L946.4 107Z" fill="#7d9cad"/><path d="M950.6 96 L957 95 L961.6 99.6 L954.6 101.4Z" fill="#a9c2cf"/><rect x="948.2" y="101.6" width="2.6" height="3.4" fill="#dfe9ee"/><rect x="952.4" y="103" width="2.8" height="4.4" fill="#f2d36a"/><rect x="957" y="101.6" width="2.6" height="3.4" fill="#c83c2c"/><rect x="952.6" y="94.4" width="2.4" height="3" fill="#5c7888"/><path d="M944 131.8 L955 134.4 L963.6 130.4 L962.6 133 L955.4 137 L946 134.4Z" fill="#a6bccf"/><path d="M951 130 L954.4 134.6 L956.6 134Z M957.4 129.6 L958.6 133 L960 132.4Z" fill="#8aa4ba"/><path d="M944.6 142.6 L963.4 141 L961.6 147.4 Q953 151.6 946.6 148Z" fill="#c03030"/><path d="M944.6 142.6 L963.4 141 L963 142.6 L945 144.4Z" fill="#e8e8ec"/><path d="M949 142 V138.6 H953 V136.4 H957.4 V139 H960.4 V141.2Z" fill="#5070a0"/><rect x="953.8" y="137.4" width="2.8" height="1.4" fill="#cfe0f2"/><circle cx="950.4" cy="172.6" r="3.7" fill="#e8bc94"/><path d="M946.6 172 Q946.4 167.8 950.4 167.8 Q954.4 167.8 954.2 172 Q952 169.6 946.6 172Z" fill="#a8703c"/><path d="M944.4 183.4 Q944.6 177.6 950.4 177.2 Q956.2 177.6 956.4 183.4Z" fill="#f2f4f8" stroke="#b7c0cc" stroke-width="0.7"/><circle cx="959.6" cy="173" r="3.5" fill="#ecc4a0"/><path d="M955.6 175.4 Q955 168.2 959.6 168.4 Q964.2 168.2 963.8 175.6 Q962.4 170.8 955.6 175.4Z" fill="#b8844a"/><path d="M954.6 183.6 Q954.8 178.4 959.6 177.8 Q964.6 178.4 964.8 183.6Z" fill="#f1b9bf" stroke="#c98d96" stroke-width="0.7"/><path d="M1113.6 113 Q1113.6 109.8 1118 109.8 Q1122.4 109.8 1122.4 113" fill="none" stroke="#1c1c1c" stroke-width="1.8"/><path d="M1107.6 121 Q1107.6 112.6 1113 112.4 H1123 Q1128.4 112.6 1128.6 121 Q1128.6 123.6 1126 123.6 H1110 Q1107.6 123.6 1107.6 121Z" fill="#161616"/><path d="M1109.6 117.4 Q1118 115.4 1126.6 117.4" fill="none" stroke="#6c6c6c" stroke-width="0.9"/><rect x="1116.6" y="114.4" width="3" height="3.4" fill="#8c8c8c"/><rect x="1121.6" y="118.6" width="4" height="1.4" fill="#555"/><path d="M1117 159 L1121 158.4 L1128 156 L1126.6 166.4 H1119.6Z" fill="#b9c0c8" stroke="#7e8790" stroke-width="0.8"/><path d="M1122 154.4 L1128.6 156.4" stroke="#6f7780" stroke-width="1.2"/><circle cx="1121" cy="169.4" r="1.3" fill="#555"/><circle cx="1126" cy="169.4" r="1.3" fill="#555"/><circle cx="1114.6" cy="161.4" r="4.1" fill="#ecc09a"/><path d="M1110.2 161.6 Q1109.6 155.6 1114.8 155.8 Q1119.6 156 1118.8 160 Q1115 157.8 1110.2 161.6Z" fill="#9c5a2c"/><path d="M1107.2 175.2 Q1107.4 167.6 1112 166.6 L1114.6 169.6 L1117.4 166.6 Q1122 167.6 1122.2 175.2Z" fill="#c04020"/><path d="M1112.8 167 L1114.6 172.8 L1116.6 167 L1114.6 169.2Z" fill="#f4f4f4"/><path d="M1114.2 169.6 H1115.2 L1115.6 174 H1113.8Z" fill="#7a1c10"/><path d="M1275.6 100.6 L1289 95.2 L1300.4 99 V122 L1289.6 134.4 L1275.6 129.4Z" fill="url(#tw)"/><path d="M1289 95.2 L1300.4 99 L1287.6 104.6 L1275.6 100.6Z" fill="#d6e8f6"/><path d="M1287.6 104.6 L1300.4 99 V122 L1287.6 128Z" fill="#5d94c8"/><path d="M1291.4 103 L1295 101.4 V124.4 L1291.4 126.2Z" fill="#2e6da4"/><path d="M1275.6 104.6 L1287.6 108.8 M1275.6 108.6 L1287.6 112.8 M1275.6 112.6 L1287.6 116.8 M1275.6 116.6 L1287.6 120.8 M1275.6 120.6 L1287.6 124.8 M1275.6 124.6 L1287.6 128.8" stroke="#6d9cc6" stroke-width="1.3" fill="none"/><path d="M1287.6 122.6 L1303.4 116.8 L1313.8 120.6 V131.4 L1299.6 139.2 L1287.6 134.4Z" fill="#9fb6c8"/><path d="M1287.6 122.6 L1303.4 116.8 L1313.8 120.6 L1299.6 127Z" fill="#dbe7f0"/><path d="M1299.6 127 L1313.8 120.6 V131.4 L1299.6 139.2Z" fill="#6f8ba4"/><path d="M1287.6 126.4 L1299.6 131 M1287.6 130.2 L1299.6 134.8" stroke="#5f88ae" stroke-width="1.2" fill="none"/><path d="M1301.6 128.6 L1312 124 M1301.6 132.4 L1312 127.8" stroke="#48647e" stroke-width="1.2" fill="none"/><path d="M262.4 178.79999999999998 H271.6 L267 183.79999999999998Z" fill="#6f6f6f"/><path d="M326.4 178.79999999999998 H335.6 L331 183.79999999999998Z" fill="#6f6f6f"/><path d="M396.4 178.79999999999998 H405.6 L401 183.79999999999998Z" fill="#6f6f6f"/><path d="M473.4 178.79999999999998 H482.6 L478 183.79999999999998Z" fill="#6f6f6f"/><path d="M553.4 178.79999999999998 H562.6 L558 183.79999999999998Z" fill="#6f6f6f"/><path d="M619.4 178.79999999999998 H628.6 L624 183.79999999999998Z" fill="#6f6f6f"/><path d="M683.4 178.79999999999998 H692.6 L688 183.79999999999998Z" fill="#6f6f6f"/><path d="M745.4 178.79999999999998 H754.6 L750 183.79999999999998Z" fill="#6f6f6f"/><path d="M1289.4 178.79999999999998 H1298.6 L1294 183.79999999999998Z" fill="#6f6f6f"/><path d="M866.4 101.6 H875.6 L871 106.6Z" fill="#6f6f6f"/><path d="M914.4 138.1 H923.6 L919 143.1Z" fill="#6f6f6f"/><path d="M855.4 174.1 H864.6 L860 179.1Z" fill="#6f6f6f"/><path d="M1031.4 101.6 H1040.6 L1036 106.6Z" fill="#6f6f6f"/><path d="M1087.4 138.1 H1096.6 L1092 143.1Z" fill="#6f6f6f"/><path d="M1008.4 174.1 H1017.6 L1013 179.1Z" fill="#6f6f6f"/><path d="M1193.4 114.1 H1202.6 L1198 119.1Z" fill="#6f6f6f"/><path d="M1230.4 162.1 H1239.6 L1235 167.1Z" fill="#6f6f6f"/><path d="M1410 210.6 L1414.2 206.4 L1418.4 210.6" fill="none" stroke="#5c5c5c" stroke-width="1.7"/><circle cx="22.4" cy="241.3" r="10" fill="#fdf3fd" stroke="#4e6fa6" stroke-width="1.6"/><path d="M28.6 241.3 H17.6 M22 236.4 L17 241.3 L22 246.2" fill="none" stroke="#4a7ab8" stroke-width="2.4"/><path d="M1406.6 241 L1415.4 232.4 L1424.4 241 V250.8 H1406.6Z" fill="#fafafa" stroke="#8e8a8c" stroke-width="0.8"/><rect x="1420.4" y="231.4" width="2.8" height="5.4" fill="#f6f6f6" stroke="#4a4246" stroke-width="0.9"/><path d="M1404.8 241.4 L1415.4 231 L1426.2 241.4" fill="none" stroke="#3a3236" stroke-width="2.1"/><rect x="1413.2" y="242.2" width="5" height="8.8" fill="#d28a3a"/><rect x="1414" y="235.6" width="3" height="3.6" fill="#8aa098"/><rect x="1408" y="244" width="3.8" height="3.8" fill="#dde6f0"/><rect x="1419.6" y="244" width="3.8" height="3.8" fill="#dde6f0"/><rect x="1406.4" y="250.4" width="18.2" height="1.3" fill="#4a4a46"/><path d="M24 285 L32.4 294.6" stroke="#9a9a9a" stroke-width="3.4" stroke-linecap="round"/><path d="M24 285 L32.4 294.6" stroke="#d0d0d0" stroke-width="1.3" stroke-linecap="round"/><circle cx="17.8" cy="277.8" r="8.4" fill="url(#mg)" stroke="#a6a6a6" stroke-width="1.4"/><rect x="12" y="346.6" width="17.6" height="17.6" fill="#efefef" stroke="#bdbdbd" stroke-width="0.9"/><g fill="#b9b9b9"><rect x="13.6" y="349.6" width="2" height="2"/><rect x="17" y="349.8" width="9.6" height="1.5"/><rect x="13.6" y="354" width="2" height="2"/><rect x="17" y="354.2" width="8" height="1.5"/><rect x="13.6" y="358.4" width="2" height="2"/><rect x="17" y="358.6" width="5" height="1.5"/></g><circle cx="28.5" cy="363.6" r="8.5" fill="#f6f6f8" stroke="#b4b8c4" stroke-width="0.9"/><circle cx="28.5" cy="363.6" r="6.8" fill="url(#ck)"/><path d="M28.5 359.4 V364 L31 365.6" fill="none" stroke="#aab6e0" stroke-width="0.9"/><path d="M15.4 385.4 L33.4 403.4 M33.4 385.4 L15.4 403.4" stroke="#e0663e" stroke-width="3.7" fill="none"/><rect x="18.4" y="417.2" width="12.6" height="10" fill="#fff" stroke="#8a8a8a" stroke-width="1"/><rect x="12" y="425.8" width="25.4" height="12.2" rx="1.6" fill="#6e6e6e"/><rect x="17.6" y="425.8" width="14.2" height="1.7" fill="#4a90d9"/><rect x="18.4" y="431.8" width="12.6" height="10.4" fill="#fff" stroke="#8a8a8a" stroke-width="1"/><rect x="21" y="434.8" width="7.4" height="1.4" fill="#4a90d9"/><rect x="21" y="437.8" width="7.4" height="1.4" fill="#4a90d9"/><rect x="18.4" y="452.4" width="12.6" height="10" fill="#fff" stroke="#8a8a8a" stroke-width="1"/><rect x="12" y="461.0" width="25.4" height="12.2" rx="1.6" fill="#6e6e6e"/><rect x="17.6" y="461.0" width="14.2" height="1.7" fill="#4a90d9"/><rect x="18.4" y="467.0" width="12.6" height="10.4" fill="#fff" stroke="#8a8a8a" stroke-width="1"/><rect x="21" y="470.0" width="7.4" height="1.4" fill="#4a90d9"/><rect x="21" y="473.0" width="7.4" height="1.4" fill="#4a90d9"/><rect x="25.4" y="484.6" width="12" height="15.6" fill="#fdfdfd" stroke="#b9b9b9" stroke-width="0.8"/><path d="M27.6 488 H35.4 M27.6 490.8 H35.4 M27.6 493.6 H35.4 M27.6 496.4 H33" stroke="#7aa2d6" stroke-width="0.9" fill="none"/><path d="M12.4 485.4 Q12.4 484 13.8 484 H20.4 L22.4 487 V512 L12.4 514.6Z" fill="#e4c760"/><path d="M12.6 514.4 Q19.6 500.4 18.6 487.6 L27.6 484.6 Q29 498.6 29.4 502 L36.6 503.4 L32.4 510.4Z" fill="#f4e08a" stroke="#d8bc58" stroke-width="0.7"/><path d="M15.6 524.4 H21 V528 L23 531.6 V546.6 H12.8 V535Z M28 524.4 H33.4 L36.4 535 V546.6 H26 V531.6 L28 528Z" fill="#3f7fc4"/><rect x="22.6" y="531" width="3.8" height="8.6" fill="#3f7fc4"/><rect x="12.8" y="542.4" width="10.2" height="1.4" fill="#2c62a0"/><rect x="26" y="542.4" width="10.4" height="1.4" fill="#2c62a0"/><path d="M17 526 V529 M31.6 526 V529" stroke="#7fb0e6" stroke-width="1.2"/><path d="M24.4 559.4 V580 M14 569.6 H35" stroke="#3f7fc4" stroke-width="3.8" fill="none"/><path d="M27 594.4 H10.8 V610.8 H19" fill="none" stroke="#8a8a8a" stroke-width="1.1"/><path d="M20 610.8 L21.6 604.6 L33.2 592.8 L37.6 597 L26 609Z" fill="#3f7fc4"/><path d="M33.2 592.8 L35 591 Q36.8 589.8 38.2 591.2 L39.6 592.6 Q40.6 594 39.4 595.2 L37.6 597Z" fill="#2f68aa"/><rect x="13.4" y="651.4" width="22.4" height="21.6" fill="#fdfdfd" stroke="#c2c2c2" stroke-width="0.8"/><rect x="15.4" y="656.4" width="5.4" height="16" fill="url(#b1)"/><rect x="22" y="661.4" width="5.4" height="11" fill="url(#b2)"/><rect x="28.6" y="653.4" width="5.6" height="19" fill="url(#b3)"/><rect x="11.4" y="688" width="26.8" height="18.6" rx="4.4" fill="#d82828"/><path d="M21.4 692.6 L29.6 697.3 L21.4 702Z" fill="#fff"/><path d="M99 976 L104 982.2 L109 976" fill="none" stroke="#8a8a8a" stroke-width="2.5"/><circle cx="155.6" cy="974.7" r="7.3" fill="#f4cfa6" stroke="#e9b88c" stroke-width="1.4"/><text x="151.6" y="979" font-size="11.5" font-weight="bold" fill="#cf8030" font-family="Liberation Sans">€</text><circle cx="163.2" cy="982" r="7.4" fill="#90cf40" stroke="#6ba92c" stroke-width="1.4"/><text x="159.9" y="986.6" font-size="12.5" font-weight="bold" fill="#2e7a10" font-family="Liberation Sans">$</text></svg>
<div class="b" style="left:409px;top:228px;width:622px;height:586px;background:#fbfbfb;border:1px solid #2f70a6;"></div>
<div class="b" style="left:419px;top:272px;width:603px;height:532px;background:#fdfdfd;border:1px solid #dcdcdc;"></div>
<div class="b" style="left:1022px;top:272px;width:3px;height:1px;background:#dcdcdc;"></div>
<div class="b" style="left:1022px;top:803px;width:3px;height:1px;background:#dcdcdc;"></div>
<div class="b" style="left:416px;top:272px;width:3px;height:1px;background:#dcdcdc;"></div>
<div class="b" style="left:416px;top:803px;width:3px;height:1px;background:#dcdcdc;"></div>
<div class="b" style="left:426px;top:280px;width:476px;height:517px;background:#fff;border:1px solid #d4d4d4;"></div>
<div class="b" style="left:910px;top:280px;width:104px;height:517px;background:#fff;border:1px solid #d4d4d4;"></div>
<div class="b" style="left:518px;top:295px;width:139px;height:24px;background:#fff;border:1px solid #ababab;"></div>
<div class="b" style="left:520px;top:297px;width:16px;height:18px;background:#0a64c8;"></div>
<div class="b" style="left:536px;top:297px;width:1px;height:18px;background:#222;"></div>
<div class="b" style="left:518px;top:323px;width:372px;height:24px;background:#fff;border:1px solid #ababab;"></div>
<div class="b" style="left:518px;top:352px;width:139px;height:24px;background:#fff;border:1px solid #ababab;"></div>
<div class="b" style="left:632px;top:353px;width:24px;height:22px;background:#ebebeb;border-left:1px solid #ababab;"></div>
<div class="b" style="left:518px;top:380px;width:139px;height:24px;background:#fff;border:1px solid #ababab;"></div>
<div class="b" style="left:632px;top:381px;width:24px;height:22px;background:#ebebeb;border-left:1px solid #ababab;"></div>
<div class="b" style="left:518px;top:409px;width:139px;height:24px;background:#fff;border:1px solid #ababab;"></div>
<div class="b" style="left:632px;top:410px;width:24px;height:22px;background:#ebebeb;border-left:1px solid #ababab;"></div>
<div class="b" style="left:437px;top:447px;width:454px;height:335px;background:#fff;border:1px solid #adadad;border-top:2px solid #a8a8a8;"></div>
<div class="b" style="left:438px;top:449px;width:1px;height:50px;background:#a8a8a8;"></div>
<div class="b" style="left:464px;top:473px;width:174px;height:25px;background:#cce4f7;border-top:1px solid #a9c6e0;border-left:1px solid #a9c6e0;"></div>
<div class="b" style="left:439px;top:498px;width:451px;height:1px;background:#a8a8a8;"></div>
<div class="b" style="left:638px;top:473px;width:252px;height:26px;background:#fff;border:1px dotted #222;"></div>
<span class="t" style="left:429.8px;top:242.000px;font-size:17.6px;color:#444;letter-spacing:-0.250px;transform:scaleX(0.9467);">YENİ KASA HESABI</span>
<span class="t" style="left:437.3px;top:298.000px;font-size:16.1px;color:#333;letter-spacing:-0.250px;transform:scaleX(0.9081);">Kasa Kodu</span>
<span class="t" style="left:437.3px;top:326.000px;font-size:16.1px;color:#333;letter-spacing:-0.250px;transform:scaleX(0.9047);">Kasa Adı</span>
<span class="t" style="left:437.3px;top:355.000px;font-size:16.1px;color:#333;letter-spacing:-0.250px;transform:scaleX(0.8936);">Döviz Cinsi</span>
<span class="t" style="left:437.3px;top:383.000px;font-size:16.1px;color:#333;letter-spacing:-0.250px;transform:scaleX(0.9190);">Grup Kodu</span>
<span class="t" style="left:437.3px;top:412.000px;font-size:16.1px;color:#333;letter-spacing:-0.250px;transform:scaleX(0.9411);">Durumu</span>
<span class="t" style="left:520.4px;top:298.000px;font-size:16.1px;color:#fff;letter-spacing:-0.250px;transform:scaleX(0.9062);">04</span>
<span class="t" style="left:520.4px;top:326.000px;font-size:16.1px;color:#333;letter-spacing:-0.250px;transform:scaleX(0.9322);">Patron TL Kasası</span>
<span class="t" style="left:549.8px;top:355.000px;font-size:16.1px;color:#333;letter-spacing:-0.250px;transform:scaleX(0.9220);">TL</span>
<span class="t" style="left:549.3px;top:412.000px;font-size:16.1px;color:#333;letter-spacing:-0.250px;transform:scaleX(0.9274);">Aktif Hesap</span>
<span class="t" style="left:468.4px;top:454.000px;font-size:15.4px;color:#0f6fc6;font-weight:bold;">Muhasebe Hesap Kodları</span>
<span class="t" style="left:493px;top:478.000px;font-size:16.1px;color:#333;letter-spacing:-0.250px;transform:scaleX(0.8904);">Kasa</span>
<span class="t" style="left:640px;top:478.000px;font-size:16.1px;color:#333;letter-spacing:-0.250px;transform:scaleX(0.9378);">100 01</span>
<span class="t" style="left:939.4px;top:335.000px;font-size:16.1px;color:#333;letter-spacing:-0.250px;transform:scaleX(0.9514);"><u>K</u>aydet</span>
<span class="t" style="left:947.5px;top:398.000px;font-size:16.1px;color:#333;letter-spacing:-0.134px;"><u>İ</u>ptal</span>
<svg style="left:0;top:0" width="1439" height="1042" viewBox="0 0 1439 1042"><defs><linearGradient id="fl" x1="0" y1="0" x2="0" y2="1"><stop offset="0" stop-color="#f04a50"/><stop offset="0.5" stop-color="#e81c24"/><stop offset="1" stop-color="#c8141c"/></linearGradient><radialGradient id="rc" cx="50%" cy="30%" r="75%"><stop offset="0" stop-color="#f25a5a"/><stop offset="0.55" stop-color="#d62020"/><stop offset="1" stop-color="#8e0c0c"/></radialGradient><linearGradient id="fd" x1="0" y1="0" x2="1" y2="1"><stop offset="0" stop-color="#9a9ab6"/><stop offset="1" stop-color="#5c5c7c"/></linearGradient></defs><rect x="521" y="355" width="23" height="16.6" rx="1" fill="url(#fl)"/><circle cx="528.4" cy="363.4" r="4.3" fill="#fff"/><circle cx="529.8" cy="363.4" r="3.4" fill="#e81c24"/><circle cx="533.4" cy="363.4" r="1.4" fill="#fff"/><path d="M639.8 360.0 L644.8 366.6 L649.8 360.0" fill="none" stroke="#8c8c8c" stroke-width="2.6"/><path d="M639.8 416.79999999999995 L644.8 423.4 L649.8 416.79999999999995" fill="none" stroke="#8c8c8c" stroke-width="2.6"/><g fill="#7c7c7c"><rect x="638.4" y="390.2" width="3" height="3"/><rect x="643.2" y="390.2" width="3" height="3"/><rect x="648" y="390.2" width="3" height="3"/></g><path d="M524.2 420.4 L529.6 426.2 L541.6 414.2" fill="none" stroke="#72a89a" stroke-width="2.1"/><path d="M456.8 456.8 V465.2 H448.4Z" fill="#848484"/><path d="M949 300.2 H971.6 L976.2 304.6 V327.2 H949Z" fill="url(#fd)"/><rect x="956.8" y="300.2" width="13.6" height="10.6" fill="#dcdce6"/><rect x="963.6" y="302" width="3.4" height="7.6" fill="#4a4a64"/><rect x="953" y="315" width="19.4" height="12.2" fill="#e6e6e6"/><rect x="953" y="315" width="19.4" height="1.2" fill="#f8f8f8"/><ellipse cx="962.6" cy="328.2" rx="14" ry="1.2" fill="#c9c9cf"/><circle cx="962.2" cy="378.8" r="14.4" fill="url(#rc)"/><ellipse cx="962.2" cy="371.4" rx="10" ry="5.4" fill="#fff" opacity="0.16"/><path d="M955.8 372.4 L968.6 385.2 M968.6 372.4 L955.8 385.2" stroke="#fff" stroke-width="3" fill="none"/></svg>
</body></html>
